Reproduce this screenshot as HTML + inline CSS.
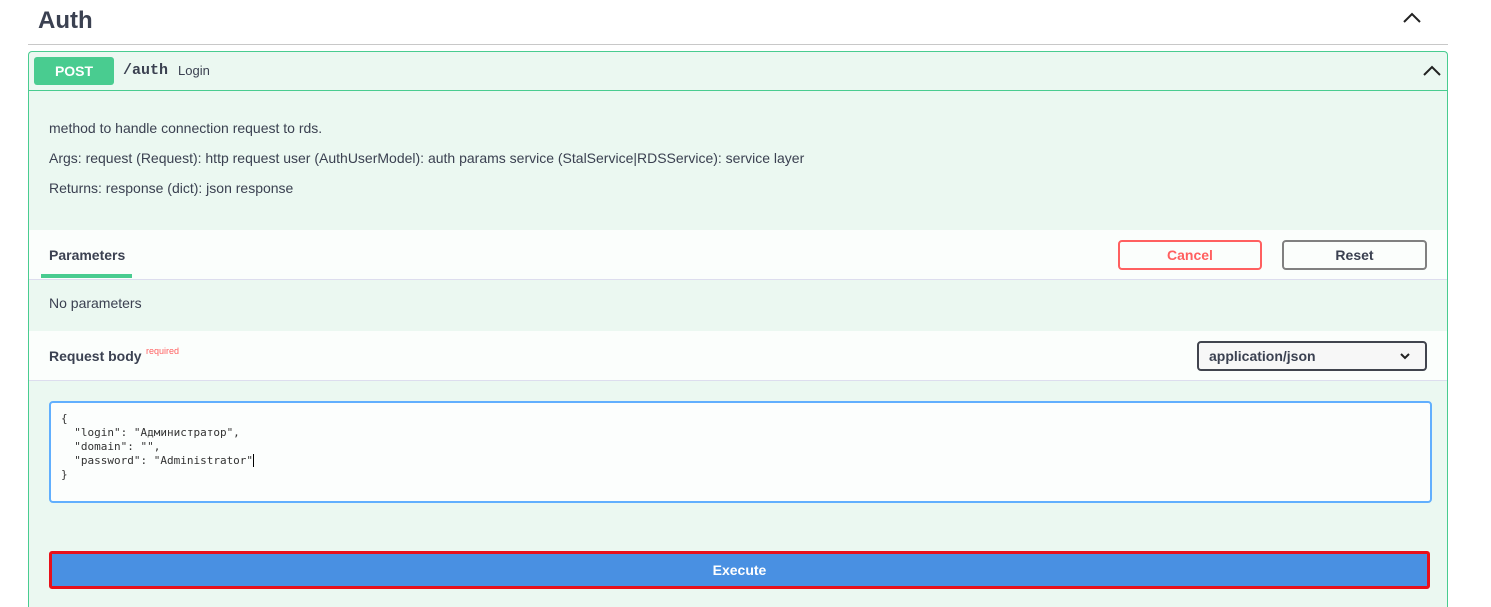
<!DOCTYPE html>
<html><head><style>
*{box-sizing:border-box;margin:0;padding:0}
html,body{width:1491px;height:607px;overflow:hidden}
body{background:#fff;font-family:"Liberation Sans",sans-serif;color:#3b4151;position:relative}
.abs{position:absolute}
</style></head><body>
<div class="abs" style="left:38px;top:7px;font-size:24px;font-weight:bold;">Auth</div>
<svg class="abs" style="left:1402px;top:11px" width="20" height="14" viewBox="0 0 20 14"><path d="M2 11 L10 3 L18 11" fill="none" stroke="#222" stroke-width="2"/></svg>
<div class="abs" style="left:28px;top:44px;width:1420px;height:1px;background:#c8c8c8"></div>
<div class="abs" style="left:28px;top:51px;width:1420px;height:556px;background:#ebf8f1;border:1px solid #49cc90;border-bottom:none;border-radius:4px 4px 0 0"></div>
<div class="abs" style="left:29px;top:90px;width:1418px;height:1px;background:#49cc90"></div>
<div class="abs" style="left:34px;top:57px;width:80px;height:28px;background:#49cc90;border-radius:3px;color:#fff;font-weight:bold;font-size:14px;text-align:center;line-height:28px">POST</div>
<div class="abs" style="left:123px;top:62px;font-family:'Liberation Mono',monospace;font-weight:bold;font-size:15px">/auth</div>
<div class="abs" style="left:178px;top:63px;font-size:13px">Login</div>
<svg class="abs" style="left:1422px;top:64px" width="20" height="14" viewBox="0 0 20 14"><path d="M2 11 L10 3 L18 11" fill="none" stroke="#222" stroke-width="2"/></svg>
<div class="abs" style="left:49px;top:120px;font-size:14px">method to handle connection request to rds.</div>
<div class="abs" style="left:49px;top:150px;font-size:14px">Args: request (Request): http request user (AuthUserModel): auth params service (StalService|RDSService): service layer</div>
<div class="abs" style="left:49px;top:180px;font-size:14px">Returns: response (dict): json response</div>
<div class="abs" style="left:29px;top:230px;width:1418px;height:50px;background:rgba(255,255,255,.8);border-bottom:1px solid #dde"></div>
<div class="abs" style="left:49px;top:247px;font-size:14px;font-weight:bold">Parameters</div>
<div class="abs" style="left:41px;top:274px;width:91px;height:4px;background:#49cc90"></div>
<div class="abs" style="left:1118px;top:240px;width:144px;height:30px;border:2px solid #ff6060;border-radius:4px;color:#ff6060;font-weight:bold;font-size:14px;text-align:center;line-height:26px">Cancel</div>
<div class="abs" style="left:1282px;top:240px;width:145px;height:30px;border:2px solid #808080;border-radius:4px;font-weight:bold;font-size:14px;text-align:center;line-height:26px">Reset</div>
<div class="abs" style="left:49px;top:295px;font-size:14px">No parameters</div>
<div class="abs" style="left:29px;top:331px;width:1418px;height:50px;background:rgba(255,255,255,.8);border-bottom:1px solid #dde"></div>
<div class="abs" style="left:49px;top:348px;font-size:14px;font-weight:bold">Request body</div>
<div class="abs" style="left:146px;top:346px;font-size:9px;color:#ff6060">required</div>
<div class="abs" style="left:1197px;top:341px;width:230px;height:30px;border:2px solid #41444e;border-radius:4px;background:#f7f7f7;font-weight:bold;font-size:14px;line-height:26px;padding-left:10px">application/json</div>
<svg class="abs" style="left:1399px;top:351px" width="12" height="10" viewBox="0 0 12 10"><path d="M2 3 L6 7 L10 3" fill="none" stroke="#222" stroke-width="2"/></svg>
<div class="abs" style="left:49px;top:401px;width:1383px;height:102px;border:2px solid #61affe;border-radius:4px;background:#fcfefd;font-family:'DejaVu Sans Mono',monospace;font-size:11px;line-height:14px;padding:9px 10px;white-space:pre;color:#333">{
  "login": "Администратор",
  "domain": "",
  "password": "Administrator"<span style="border-left:1px solid #000"></span>
}</div>
<div class="abs" style="left:49px;top:551px;width:1381px;height:38px;background:#4990e2;border:3px solid #e8101a;border-radius:3px;color:#fff;font-weight:bold;font-size:14px;text-align:center;line-height:32px">Execute</div>
</body></html>
